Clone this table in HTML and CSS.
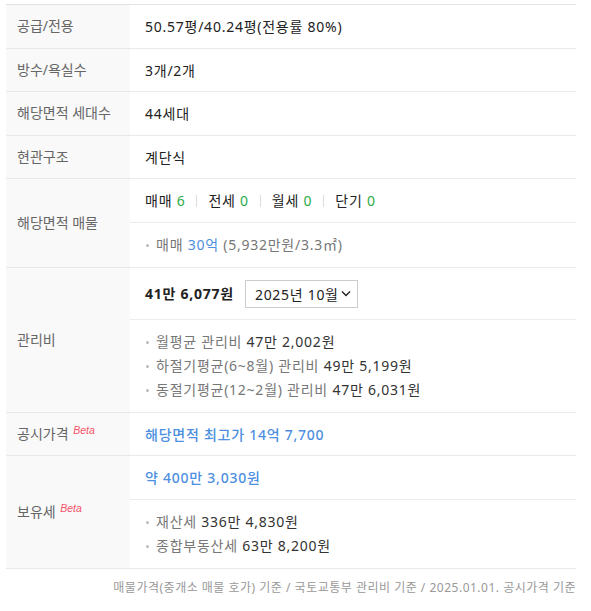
FILE: index.html
```html
<!DOCTYPE html>
<html lang="ko">
<head>
    <meta charset="UTF-8">
    <meta name="viewport" content="width=device-width, initial-scale=1.0">
    <title>단지 정보</title>
    <link rel="stylesheet" href="styles.css">
</head>
<body>
    <div class="info">
        <div class="row">
            <div class="label"><span>공급/전용</span></div>
            <div class="value"><div class="cell">50.57평/40.24평(전용률 80%)</div></div>
        </div>
        <div class="row">
            <div class="label"><span>방수/욕실수</span></div>
            <div class="value"><div class="cell">3개/2개</div></div>
        </div>
        <div class="row">
            <div class="label"><span>해당면적 세대수</span></div>
            <div class="value"><div class="cell">44세대</div></div>
        </div>
        <div class="row">
            <div class="label"><span>현관구조</span></div>
            <div class="value"><div class="cell">계단식</div></div>
        </div>
        <div class="row">
            <div class="label"><span>해당면적 매물</span></div>
            <div class="value">
                <div class="cell deals">
                    <span>매매 <em class="count">6</em></span>
                    <span class="sep"></span>
                    <span>전세 <em class="count">0</em></span>
                    <span class="sep"></span>
                    <span>월세 <em class="count">0</em></span>
                    <span class="sep"></span>
                    <span>단기 <em class="count">0</em></span>
                </div>
                <ul class="cell list">
                    <li>매매 <span class="blue">30억</span> (5,932만원/3.3㎡)</li>
                </ul>
            </div>
        </div>
        <div class="row">
            <div class="label"><span>관리비</span></div>
            <div class="value">
                <div class="cell fee">
                    <strong>41만 6,077원</strong>
                    <button class="month">2025년 10월<svg width="10" height="7" viewBox="0 0 10 7"><path d="M1 1.5 5 5.5 9 1.5" fill="none" stroke="#222" stroke-width="1.4"/></svg></button>
                </div>
                <ul class="cell list">
                    <li>월평균 관리비 <span class="num">47만 2,002원</span></li>
                    <li>하절기평균(6~8월) 관리비 <span class="num">49만 5,199원</span></li>
                    <li>동절기평균(12~2월) 관리비 <span class="num">47만 6,031원</span></li>
                </ul>
            </div>
        </div>
        <div class="row">
            <div class="label"><span>공시가격 <sup class="beta">Beta</sup></span></div>
            <div class="value"><div class="cell blue strong">해당면적 최고가 14억 7,700</div></div>
        </div>
        <div class="row">
            <div class="label"><span>보유세 <sup class="beta">Beta</sup></span></div>
            <div class="value">
                <div class="cell blue strong">약 400만 3,030원</div>
                <ul class="cell list">
                    <li>재산세 <span class="num">336만 4,830원</span></li>
                    <li>종합부동산세 <span class="num">63만 8,200원</span></li>
                </ul>
            </div>
        </div>
    </div>
    <p class="note">매물가격(중개소 매물 호가) 기준 / 국토교통부 관리비 기준 / 2025.01.01. 공시가격 기준</p>
</body>
</html>
```

FILE: styles.css
```css
body {
    margin: 0;
    padding: 4px 15px 0 6px;
    background: #fff;
    color: #222;
    font-family: "Noto Sans", "Noto Sans CJK KR", sans-serif;
    font-size: 14px;
}

.info {
    border-top: 1px solid #e3e3e3;
}

.row {
    display: grid;
    grid-template-columns: 124px 1fr;
    border-bottom: 1px solid #e9e9e9;
}

.label {
    display: flex;
    align-items: center;
    padding-left: 11px;
    background: #f9f9f9;
    color: #666;
    line-height: 24px;
}

.beta {
    margin-left: 1px;
    color: #f5536a;
    font-size: 10.5px;
    font-style: italic;
    font-family: "Liberation Sans", Arial, sans-serif;
    line-height: 0;
    vertical-align: 5px;
}

.value {
    min-width: 0;
    letter-spacing: 0.75px;
}

.cell {
    margin: 0;
    padding: 10px 15px 9px;
    line-height: 24px;
    height: 23.5px;
}

.cell + .cell {
    border-top: 1px solid #ececec;
}

.deals {
    display: flex;
    align-items: center;
}

.count {
    font-style: normal;
    color: #2bab48;
}

.sep {
    width: 1px;
    height: 12px;
    margin: 0 11px;
    background: #ddd;
}

.list {
    list-style: none;
    color: #777;
    height: auto;
    padding-bottom: 10px;
}

.list li {
    position: relative;
    padding-left: 11px;
    height: 24px;
    white-space: nowrap;
}

.list li::before {
    content: "";
    position: absolute;
    left: 1px;
    top: 11px;
    width: 3px;
    height: 3px;
    border-radius: 50%;
    background: #bbb;
}

.num {
    color: #333;
}

.blue {
    color: #4d8fe0;
}

.strong {
    font-weight: 500;
}

.fee {
    display: flex;
    align-items: center;
    height: 28px;
    padding-top: 12px;
    padding-bottom: 11px;
}

.fee strong {
    font-weight: 700;
    color: #222;
}

.month {
    display: flex;
    align-items: center;
    gap: 2px;
    height: 28px;
    margin-left: 11px;
    padding: 0 6px 0 9px;
    border: 1px solid #ccc;
    background: #fff;
    color: #222;
    font-family: inherit;
    font-size: 14px;
    letter-spacing: 0.7px;
}

.note {
    margin: 9px 0 0;
    text-align: right;
    color: #999;
    font-size: 12px;
    line-height: 20px;
    letter-spacing: 0.5px;
}
```
